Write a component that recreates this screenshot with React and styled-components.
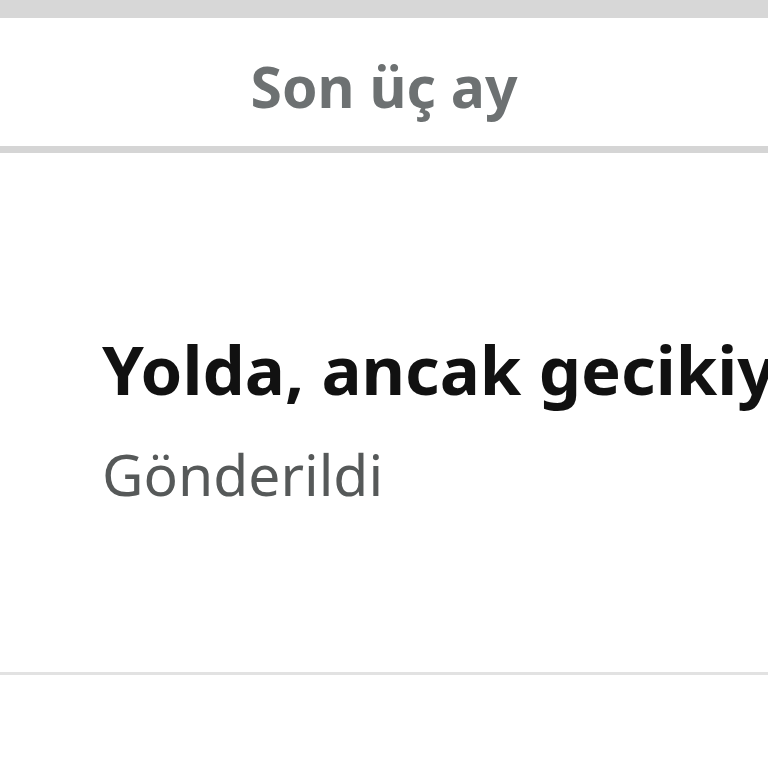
import React from 'react';
import styled, { createGlobalStyle } from 'styled-components';

const Global = createGlobalStyle`
  html, body {
    margin: 0;
    padding: 0;
    background: #fff;
    overflow: hidden;
  }
  body {
    font-family: "Noto Sans", "Open Sans", sans-serif;
  }
`;

const Page = styled.div`
  width: 768px;
  height: 768px;
  display: flex;
  flex-direction: column;
  background: #fff;
`;

const TopBar = styled.div`
  height: 18px;
  background: #d7d7d7;
  flex: none;
`;

const Header = styled.div`
  height: 128px;
  box-sizing: border-box;
  padding-top: 8px;
  display: flex;
  align-items: center;
  justify-content: center;
  flex: none;
`;

const HeaderTitle = styled.h2`
  margin: 0;
  font-size: 57px;
  font-weight: 700;
  color: #6d7172;
  letter-spacing: 0;
`;

const Divider = styled.div`
  height: ${p => p.size}px;
  background: ${p => p.color};
  flex: none;
`;

const Card = styled.div`
  height: 519px;
  padding-left: 102px;
  display: flex;
  flex-direction: column;
  justify-content: center;
  overflow: hidden;
  flex: none;
`;

const Status = styled.div`
  font-size: 67px;
  font-weight: 700;
  color: #111;
  white-space: nowrap;
  line-height: 1.2;
  margin-top: 12px;
`;

const SubStatus = styled.div`
  font-size: 57px;
  color: #565959;
  white-space: nowrap;
  line-height: 1.2;
  margin-top: 31px;
`;

export default function App() {
  return (
    <Page>
      <Global />
      <TopBar />
      <Header>
        <HeaderTitle>Son üç ay</HeaderTitle>
      </Header>
      <Divider size={7} color="#d5d5d5" />
      <Card>
        <Status>Yolda, ancak gecikiyor</Status>
        <SubStatus>Gönderildi</SubStatus>
      </Card>
      <Divider size={3} color="#e2e2e2" />
    </Page>
  );
}
